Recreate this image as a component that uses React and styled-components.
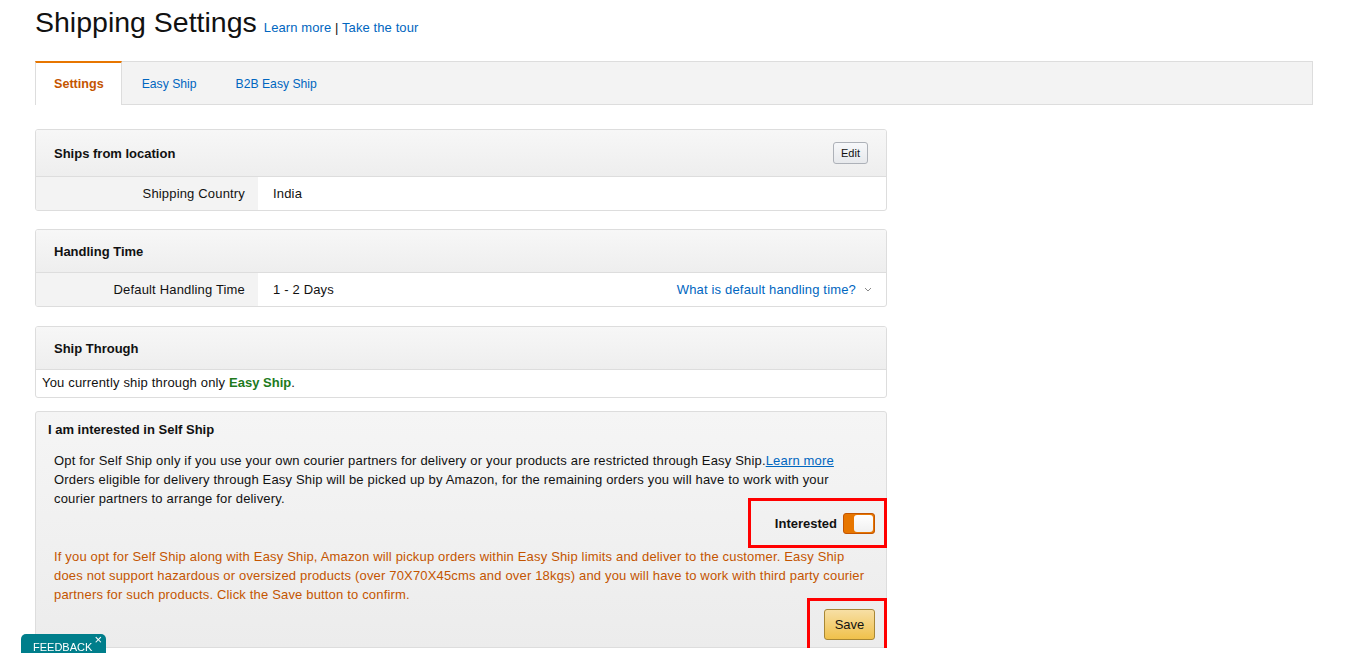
import React, { useState } from 'react';
import styled, { createGlobalStyle } from 'styled-components';

const GlobalStyle = createGlobalStyle`
  body {
    margin: 0;
    background: #fff;
    font-family: 'Liberation Sans', Arial, sans-serif;
    font-size: 13px;
    letter-spacing: 0.17px;
    color: #111;
  }
  b { letter-spacing: 0; }
`;

const Page = styled.div`
  padding: 0 33px 0 35px;
`;

const Header = styled.div`
  display: flex;
  align-items: baseline;
  gap: 7px;
  padding-top: 6px;
  height: 56px;
  box-sizing: border-box;
`;

const Title = styled.h1`
  margin: 0;
  font-size: 28.5px;
  line-height: 32px;
  font-weight: 400;
  color: #111;
  letter-spacing: 0;
`;

const HeaderLinks = styled.div`
  font-size: 13px;
  color: #111;
  letter-spacing: 0.1px;
`;

const Link = styled.a`
  color: #0066c0;
  text-decoration: ${({ underline }) => (underline ? 'underline' : 'none')};
  cursor: pointer;
`;

const Tabs = styled.div`
  display: flex;
  margin-top: 5px;
  height: 44px;
  background: #f3f3f3;
  border: 1px solid #ddd;
  box-sizing: border-box;
`;

const Tab = styled.div`
  display: flex;
  align-items: center;
  padding: 0 ${({ active }) => (active ? 17 : 18)}px 0 ${({ active }) => (active ? 18 : 19)}px;
  margin-top: -1px;
  margin-bottom: -1px;
  font-size: ${({ active }) => (active ? 12.6 : 12.2)}px;
  letter-spacing: 0;
  cursor: pointer;
  color: ${({ active }) => (active ? '#c45500' : '#0066c0')};
  font-weight: ${({ active }) => (active ? 700 : 400)};
  background: ${({ active }) => (active ? '#fff' : 'transparent')};
  border-top: 2px solid ${({ active }) => (active ? '#e77600' : 'transparent')};
  border-right: 1px solid ${({ active }) => (active ? '#ddd' : 'transparent')};
  margin-left: ${({ active }) => (active ? '-1px' : '0')};
  border-left: 1px solid ${({ active }) => (active ? '#ddd' : 'transparent')};
`;

const Column = styled.div`
  width: 852px;
  margin-top: 24px;
  display: flex;
  flex-direction: column;
`;

const Panel = styled.div`
  border: 1px solid #ddd;
  border-radius: 3px;
  margin-bottom: ${({ gap }) => gap}px;
  overflow: hidden;
  background: #fff;
`;

const PanelHead = styled.div`
  display: flex;
  align-items: center;
  justify-content: space-between;
  height: ${({ h }) => h || 42}px;
  padding: 0 18px;
  background: linear-gradient(to bottom, #f7f7f7, #eeeeee);
  border-bottom: 1px solid #ddd;
  font-weight: 700;
  font-size: 13px;
  letter-spacing: 0;
  color: #111;
`;

const EditButton = styled.button`
  font-family: 'Liberation Sans', Arial, sans-serif;
  font-size: 11px;
  color: #111;
  height: 22px;
  padding: 0 7px;
  border: 1px solid #adb1b8;
  border-radius: 3px;
  background: linear-gradient(to bottom, #f7f8fa, #e7e9ec);
  cursor: pointer;
`;

const Row = styled.div`
  display: grid;
  grid-template-columns: 222px 1fr auto;
  height: 33px;
  align-items: stretch;
`;

const Label = styled.div`
  display: flex;
  align-items: center;
  justify-content: flex-end;
  padding-right: 13px;
  background: #f3f3f3;
  color: #111;
`;

const Value = styled.div`
  display: flex;
  align-items: center;
  padding-left: 15px;
  color: #111;
`;

const Help = styled.div`
  display: flex;
  align-items: center;
  gap: 8px;
  padding-right: 14px;
  color: #0066c0;
`;

const PlainBody = styled.div`
  padding: 5px 6px 6px;
  line-height: 16px;
`;

const Green = styled.b`
  color: #207a1c;
`;

const InterestPanel = styled.div`
  border: 1px solid #ddd;
  border-radius: 3px;
  background: linear-gradient(to bottom, #f5f5f5, #ececec);
  padding: 10px 0 0 12px;
`;

const InterestTitle = styled.div`
  font-weight: 700;
  letter-spacing: 0;
  color: #111;
  line-height: 16px;
`;

const Text = styled.p`
  margin: 0 0 0 6px;
  padding-right: 16px;
  line-height: 19px;
  color: ${({ warn }) => (warn ? '#c45500' : '#111')};
  margin-top: ${({ top }) => top}px;
`;

const ActionRow = styled.div`
  display: flex;
  justify-content: flex-end;
  margin-top: ${({ top }) => top}px;
  margin-bottom: ${({ bottom }) => bottom || 0}px;
`;

const Highlight = styled.div`
  display: flex;
  align-items: center;
  justify-content: flex-end;
  gap: 6px;
  border: 3px solid #f00;
  box-sizing: border-box;
  height: ${({ h }) => h}px;
  padding: 0 ${({ pr }) => pr}px 0 ${({ pl }) => pl}px;
  margin-right: -1px;
  position: relative;
`;

const SwitchLabel = styled.span`
  font-weight: 700;
  letter-spacing: 0;
  color: #111;
`;

const Switch = styled.div`
  width: 32px;
  height: 21px;
  box-sizing: border-box;
  border: 1px solid #c45500;
  border-radius: 3px;
  background: #e77600;
  display: flex;
  justify-content: flex-end;
  padding: 1px;
  cursor: pointer;
`;

const Knob = styled.div`
  width: 19px;
  height: 100%;
  border-radius: 3px;
  background: linear-gradient(to bottom, #fff, #f0f0f0);
`;

const SaveButton = styled.button`
  font-family: 'Liberation Sans', Arial, sans-serif;
  font-size: 13px;
  color: #111;
  width: 51px;
  height: 31px;
  border: 1px solid #a88734;
  border-radius: 3px;
  background: linear-gradient(to bottom, #f7dfa5, #f0c14b);
  cursor: pointer;
`;

const Feedback = styled.div`
  position: fixed;
  left: 21px;
  bottom: 0;
  width: 85px;
  height: 19px;
  background: #007e8b;
  border-radius: 5px 5px 0 0;
  color: #fff;
  font-size: 11px;
  letter-spacing: 0;
  display: flex;
  align-items: flex-end;
  padding-left: 12px;
  box-sizing: border-box;
`;

const Close = styled.span`
  position: absolute;
  right: 4px;
  top: -2px;
  font-size: 13px;
`;

export default function App() {
  const [interested, setInterested] = useState(true);

  return (
    <>
      <GlobalStyle />
      <Page>
        <Header>
          <Title>Shipping Settings</Title>
          <HeaderLinks>
            <Link>Learn more</Link> | <Link>Take the tour</Link>
          </HeaderLinks>
        </Header>

        <Tabs>
          <Tab active>Settings</Tab>
          <Tab>Easy Ship</Tab>
          <Tab>B2B Easy Ship</Tab>
        </Tabs>

        <Column>
          <Panel gap={18}>
            <PanelHead h={46}>
              Ships from location
              <EditButton>Edit</EditButton>
            </PanelHead>
            <Row>
              <Label>Shipping Country</Label>
              <Value>India</Value>
            </Row>
          </Panel>

          <Panel gap={19}>
            <PanelHead>Handling Time</PanelHead>
            <Row>
              <Label>Default Handling Time</Label>
              <Value>1 - 2 Days</Value>
              <Help>
                What is default handling time?
                <svg width="8" height="5" viewBox="0 0 8 5">
                  <path d="M1 1l3 3 3-3" fill="none" stroke="#888" strokeWidth="1" />
                </svg>
              </Help>
            </Row>
          </Panel>

          <Panel gap={13}>
            <PanelHead>Ship Through</PanelHead>
            <PlainBody>
              You currently ship through only <Green>Easy Ship</Green>.
            </PlainBody>
          </Panel>

          <InterestPanel>
            <InterestTitle>I am interested in Self Ship</InterestTitle>
            <Text top={13}>
              Opt for Self Ship only if you use your own courier partners for delivery or your products are restricted through Easy Ship.<Link underline>Learn more</Link>
              <br />
              Orders eligible for delivery through Easy Ship will be picked up by Amazon, for the remaining orders you will have to work with your courier partners to arrange for delivery.
            </Text>
            <ActionRow top={-10}>
              <Highlight h={50} pl={24} pr={9}>
                <SwitchLabel>Interested</SwitchLabel>
                <Switch onClick={() => setInterested(!interested)}>
                  <Knob />
                </Switch>
              </Highlight>
            </ActionRow>
            <Text warn top={-1}>
              If you opt for Self Ship along with Easy Ship, Amazon will pickup orders within Easy Ship limits and deliver to the customer. Easy Ship does not support hazardous or oversized products (over 70X70X45cms and over 18kgs) and you will have to work with third party courier partners for such products. Click the Save button to confirm.
            </Text>
            <ActionRow top={-6} bottom={-4}>
              <Highlight h={53} pl={14} pr={9}>
                <SaveButton>Save</SaveButton>
              </Highlight>
            </ActionRow>
          </InterestPanel>
        </Column>
      </Page>
      <Feedback>
        FEEDBACK
        <Close>×</Close>
      </Feedback>
    </>
  );
}
